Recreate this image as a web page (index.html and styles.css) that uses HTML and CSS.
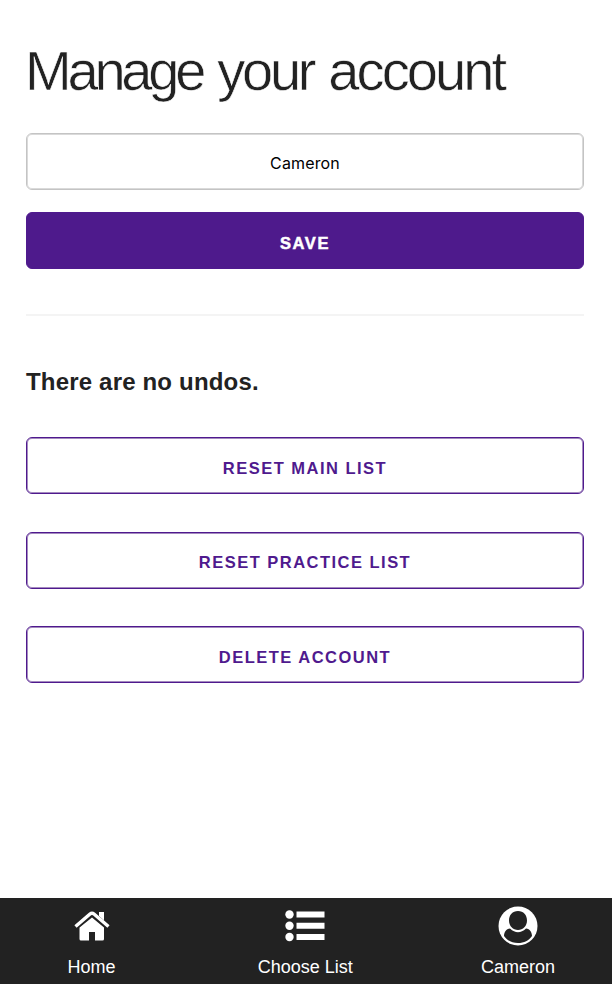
FILE: index.html
```html
<!DOCTYPE html>
<html lang="en">
<head>
<meta charset="utf-8">
<title>Manage your account</title>
<link rel="stylesheet" href="styles.css">
</head>
<body>
<main class="content">
  <h1 class="title"><span class="manage">Manage</span> <span class="your">your</span> <span class="account">account</span></h1>
  <div class="field"><span>Cameron</span></div>
  <button class="button primary">Save</button>
  <hr class="divider">
  <h2 class="warning">There are no undos.</h2>
  <div class="actions">
    <button class="button">Reset main list</button>
    <button class="button">Reset practice list</button>
    <button class="button">Delete account</button>
  </div>
</main>
<nav class="navbar">
  <a class="item"><svg class="icon" width="36" height="30" viewBox="0 0 36 30"><path d="M18 6.500 5.500 16.500V28q0 1.500 1.500 1.500h8V21h6v8.500h7.500q1.500 0 1.500-1.500V16.500zM25 1h5v11l-5-4z"/><path d="M1.500 16.500 16 3.500q2-1.700 4 0l14.500 13" fill="none" stroke="#222" stroke-width="4.500"/><path d="M1.500 15.500 16 3q2-1.700 4 0l14.500 12.500" fill="none" stroke="#fff" stroke-width="3.400"/></svg><span>Home</span></a>
  <a class="item list"><svg class="icon" width="40" height="32" viewBox="0 0 40 32"><circle cx="4.500" cy="4.500" r="4.200"/><circle cx="4.500" cy="15.700" r="4.200"/><circle cx="4.500" cy="27" r="4.200"/><path d="M11.500 1.500h28v6h-28zM11.500 12.700h28v6h-28zM11.500 24h28v6h-28z"/></svg><span>Choose List</span></a>
  <a class="item user"><svg class="icon" width="40" height="40" viewBox="0 0 40 40"><circle cx="20" cy="20" r="19.500"/><path class="cutout" d="M20 5c5.500 0 9 4 9 9.500s-4 9.500-9 9.500-9-4-9-9.500 3.500-9.500 9-9.500zM12 22.500q8 7.500 16 0c4 .5 5.800 3.500 6 7.500-3 4.500-8 7-14 7s-11-2.500-14-7c.2-4 2-7 6-7.500z"/></svg><span>Cameron</span></a>
</nav>
</body>
</html>
```
FILE: styles.css
```css
* { box-sizing: border-box; }
body { margin: 0; height: 984px; display: flex; flex-direction: column; background: #fff; color: #222; font-family: "Liberation Sans", sans-serif; }
.content { flex: 1; padding: 41px 28px 0 26px; }
.title { margin: 0 0 32px -1px; height: 60px; line-height: 60px; font-size: 56px; font-weight: 400; white-space: nowrap; -webkit-text-stroke: .6px #fff; display: flex; gap: 15px; }
.manage { letter-spacing: -4.200px; }
.your { letter-spacing: -3.200px; }
.account { letter-spacing: -2.900px; }
.field, .button { display: flex; width: 100%; height: 57px; align-items: center; justify-content: center; border-radius: 6px; }
.field { border: 1px solid #c4c4c4; box-shadow: inset 0 0 0 1px #dadada; margin-bottom: 22px; font: 16px/20px Inter, sans-serif; letter-spacing: .15px; color: #000; padding-top: 3px; }
.button { border: 1px solid #4f1a8e; box-shadow: inset 0 0 0 1px #a48abf; background: #fff; color: #4f1a8e; padding: 4px 0 0; font: bold 16.500px/20px "Liberation Sans", sans-serif; letter-spacing: 1.480px; text-transform: uppercase; }
.primary { background: #4e1a8c; box-shadow: none; color: #fff; font-weight: 900; -webkit-text-stroke: .5px #fff; letter-spacing: 1.600px; }
.divider { height: 2px; border: 0; margin: 45px 0 51px; background: #f4f4f4; }
.warning { margin: 0 0 40px; height: 30px; font-size: 24px; line-height: 30px; letter-spacing: .18px; }
.actions { display: grid; gap: 37.500px; }
.navbar { height: 86px; background: #222; color: #fff; display: flex; justify-content: space-between; padding: 0 57px 0 67.500px; font-size: 18px; }
.item { display: grid; grid-template-rows: 55px 28px; justify-items: center; align-items: center; }
.list { margin-left: 14px; }
.icon { fill: #fff; }
.cutout { fill: #222; }
```
